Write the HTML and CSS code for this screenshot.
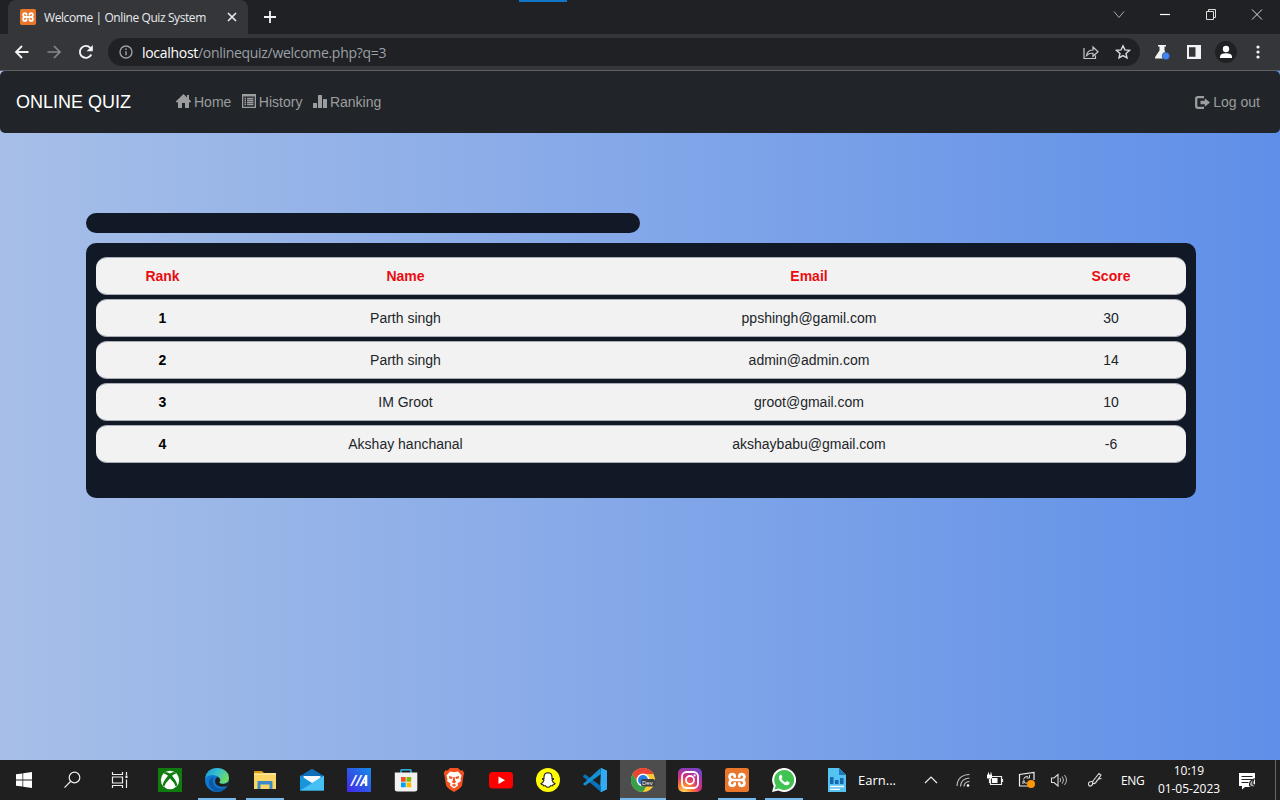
FILE: index.html
```html
<!DOCTYPE html>
<html lang="en">
<head>
<meta charset="utf-8">
<title>Welcome | Online Quiz System</title>
<link rel="stylesheet" href="styles.css">
</head>
<body>
<div class="screen">
  <svg width="0" height="0" class="defs">
    <defs>
      <symbol id="xampp" viewBox="0 0 24 24">
        <rect width="24" height="24" rx="2.5" fill="#e9762b"/>
        <path d="M9.800 8.700Q9.800 6.200 7.300 6.200T4.600 8.700Q4.600 10.800 6.800 11.800Q4.600 12.800 4.600 15.300T7.300 17.800Q9.800 17.800 9.800 15.300M14.200 8.700Q14.200 6.200 16.700 6.200T19.400 8.700Q19.400 10.800 17.200 11.800Q19.400 12.800 19.400 15.300T16.700 17.800Q14.200 17.800 14.200 15.300M8 12H16" fill="none" stroke="#fff" stroke-width="2.700" stroke-linecap="round" stroke-linejoin="round"/>
      </symbol>
    </defs>
  </svg>

  <header class="tabstrip">
    <div class="tab">
      <svg class="favicon" width="16" height="16"><use href="#xampp"/></svg>
      <span class="tab-title">Welcome | Online Quiz System</span>
      <svg class="tab-close" width="10" height="10" viewBox="0 0 10 10"><path d="M1 1l8 8M9 1L1 9" stroke="#e8eaed" stroke-width="1.700"/></svg>
    </div>
    <svg class="newtab" width="12" height="12" viewBox="0 0 12 12"><path d="M6 0v12M0 6h12" stroke="#f1f3f4" stroke-width="1.800"/></svg>
    <div class="window-controls">
      <svg width="46" height="28" viewBox="0 0 46 28"><path d="M18 11.500l5 6 5-6" fill="none" stroke="#aaa"/></svg>
      <svg width="46" height="28" viewBox="0 0 46 28"><path d="M18 14.500h10" stroke="#fff" stroke-width="1.200"/></svg>
      <svg width="46" height="28" viewBox="0 0 46 28"><path d="M18.500 11.500h7v8h-7zM20.500 11.500v-2h7v8h-2" fill="none" stroke="#ddd"/></svg>
      <svg width="46" height="28" viewBox="0 0 46 28"><path d="M18 9.500l10 10M28 9.500l-10 10" stroke="#ddd"/></svg>
    </div>
    <span class="top-handle"></span>
  </header>

  <div class="toolbar">
    <svg class="tool" width="16" height="16" viewBox="0 0 16 16"><path d="M14.500 8H2.500M8 2L2 8l6 6" fill="none" stroke="#f1f3f4" stroke-width="1.800"/></svg>
    <svg class="tool" width="16" height="16" viewBox="0 0 16 16"><path d="M1.500 8h12M8 2l6 6-6 6" fill="none" stroke="#85878a" stroke-width="1.700"/></svg>
    <svg class="tool" width="16" height="16" viewBox="0 0 16 16"><path d="M13.300 10.500A6 6 0 1 1 12.300 3.800L14 5.500" fill="none" stroke="#f1f3f4" stroke-width="1.900"/><path d="M14.800 1v6.200H8.600z" fill="#f1f3f4"/></svg>
    <div class="omnibox">
      <svg width="14" height="14" viewBox="0 0 14 14"><circle cx="7" cy="7" r="6" fill="none" stroke="#9aa0a6" stroke-width="1.400"/><path d="M7 6.200v4M7 3.500v1.400" stroke="#9aa0a6" stroke-width="1.500"/></svg>
      <span class="url"><span class="host">localhost</span>/onlinequiz/welcome.php?q=3</span>
      <span class="omni-actions">
        <svg width="16" height="16" viewBox="0 0 16 16"><path d="M1 4v10.500h11.500v-3M3.500 11.500Q4.500 6 10 6V3l5 4.700-5 4.600V9.300Q6 9 3.500 11.500z" fill="none" stroke="#c4c7c9" stroke-width="1.200"/></svg>
        <svg width="16" height="16" viewBox="0 0 16 16"><path d="M8 1.800l1.900 4.100 4.500.5-3.400 3 1 4.500L8 11.600l-4 2.300 1-4.500-3.400-3 4.500-.5z" fill="none" stroke="#d8dadd" stroke-width="1.400"/></svg>
      </span>
    </div>
    <div class="tool-actions">
      <svg width="16" height="16" viewBox="0 0 16 16"><path d="M4 1h8v1.500h-1.500v4L15 14.500H1.500Q0.500 14.500 1.200 13L5.500 6.500v-4H4z" fill="#f1f3f4"/><circle cx="12" cy="12" r="3.800" fill="#4285f4" stroke="#35363a" stroke-width=".6"/></svg>
      <svg width="16" height="16" viewBox="0 0 16 16"><path d="M1 1h14v14H1zM3 3.200v9.600h6.500V3.200z" fill="#f1f3f4" fill-rule="evenodd"/></svg>
      <svg width="22" height="22" viewBox="0 0 22 22"><circle cx="11" cy="11" r="11" fill="#202124"/><circle cx="11" cy="8" r="3.200" fill="#fff"/><path d="M5 17v-1.500Q5.500 12.300 11 12.300T17 15.500V17z" fill="#fff"/></svg>
      <svg width="16" height="16" viewBox="0 0 16 16"><g fill="#f1f3f4"><circle cx="8" cy="3" r="1.600"/><circle cx="8" cy="8" r="1.600"/><circle cx="8" cy="13" r="1.600"/></g></svg>
    </div>
  </div>

  <main class="page">
    <nav class="navbar">
      <a class="brand">ONLINE QUIZ</a>
      <div class="links">
        <a><svg width="15" height="14" viewBox="0 0 15 14"><path d="M7.500 0L11 3.400V1h2v4.300l2 2V8.200h-2V14H9V9H6v5H2V8.200H0v-.9z" fill="currentColor"/></svg>Home</a>
        <a><svg width="14" height="14" viewBox="0 0 14 14"><path d="M0 0h14v14H0zM1.300 2.600v10.100h11.400V2.600z" fill="currentColor" fill-rule="evenodd"/><path d="M2.500 4.500h1.500M5 4.500h6.500M2.500 6.500h1.500M5 6.500h6.500M2.500 8.500h1.500M5 8.500h6.500M2.500 10.500h1.500M5 10.500h6.500" stroke="currentColor" stroke-width="1.300"/></svg>History</a>
        <a><svg width="14" height="14" viewBox="0 0 14 14"><path d="M0 9.500Q0 9 .5 9H3.500Q4 9 4 9.500V14H0zM5 1.500Q5 1 5.500 1H8.500Q9 1 9 1.500V14H5zM10 5.500Q10 5 10.500 5H13.500Q14 5 14 5.500V14H10z" fill="currentColor"/></svg>Ranking</a>
      </div>
      <a class="logout"><svg width="15" height="13" viewBox="0 0 15 13"><path d="M9 1.200H3Q1.200 1.200 1.200 3v7Q1.200 11.800 3 11.800H9" fill="none" stroke="currentColor" stroke-width="2.300"/><path d="M5.500 4.700H9.800V2.200L15 6.500 9.800 10.800V8.300H5.500z" fill="currentColor"/></svg>Log out</a>
    </nav>

    <section class="container">
      <div class="bar"></div>
      <div class="panel">
        <div class="row head"><span>Rank</span><span>Name</span><span>Email</span><span>Score</span></div>
        <div class="row"><b>1</b><span>Parth singh</span><span>ppshingh@gamil.com</span><span>30</span></div>
        <div class="row"><b>2</b><span>Parth singh</span><span>admin@admin.com</span><span>14</span></div>
        <div class="row"><b>3</b><span>IM Groot</span><span>groot@gmail.com</span><span>10</span></div>
        <div class="row"><b>4</b><span>Akshay hanchanal</span><span>akshaybabu@gmail.com</span><span>-6</span></div>
      </div>
    </section>
  </main>

  <footer class="taskbar">
    <div class="system">
      <svg width="24" height="24" viewBox="0 0 24 24"><path d="M4 6.300l6.500-.9v6.200H4zM11.200 5.300L20 4v7.600h-8.800zM4 12.400h6.500v6.200L4 17.700zM11.200 12.400H20V20l-8.800-1.300z" fill="#fff"/></svg>
      <svg width="24" height="24" viewBox="0 0 24 24"><circle cx="14.500" cy="9.500" r="5.300" fill="none" stroke="#eee" stroke-width="1.200"/><path d="M10.500 13.500L4.500 19.700" stroke="#eee" stroke-width="1.200"/></svg>
      <svg width="24" height="24" viewBox="0 0 24 24"><path d="M4.500 4v2.500h10V4M4.500 20v-2.500h10V20M4.500 9h10v6h-10zM18.500 4v3M18.500 11.500V20" fill="none" stroke="#eee" stroke-width="1.200"/><path d="M17.500 7.500h2v2.500h-2z" fill="#fff"/></svg>
    </div>
    <div class="apps">
      <div class="app"><svg viewBox="0 0 24 24"><rect width="24" height="24" fill="#107c10"/><circle cx="12" cy="12" r="9.200" fill="#fff"/><path d="M7.300 4.200Q9 3.700 12 5.600 15 3.700 16.700 4.200L18.200 5.700Q16.500 5.500 14 7.800 18.500 13 19.300 17L17.800 18.800Q16.500 14.500 12 10.500 7.500 14.500 6.200 18.800L4.700 17Q5.500 13 10 7.800 7.500 5.500 5.800 5.700z" fill="#107c10"/></svg></div>
      <div class="app open"><svg viewBox="0 0 24 24"><defs><linearGradient id="edge" x1="0" y1="0" x2="1" y2=".5"><stop offset="0" stop-color="#1593d4"/><stop offset=".5" stop-color="#35bfd2"/><stop offset="1" stop-color="#70dc65"/></linearGradient></defs><circle cx="12" cy="12" r="12" fill="#1177d1"/><path d="M.2 10Q1.800 0 12 0 23 .5 24 9.500 24 15.500 18 15.800 13.500 15.700 14.500 13.500 16 10 12 8 5 5 .2 10z" fill="url(#edge)"/><path d="M9.500 9Q6 12 9 17 13 23 21.500 19.200 17 25 9.500 23.200 2 18 4.500 12 6 9 9.500 9z" fill="#0c59a4"/><path d="M13 9Q17 12 14.300 14 14 15.800 18 16 21 16 24 13.500L22.500 18Q14 20.500 10.500 15.500 9 10 13 9z" fill="#1f1f1f"/></svg></div>
      <div class="app open"><svg viewBox="0 0 24 24"><path d="M1 5V3.500Q1 3 1.500 3H9l2 2z" fill="#d99b16"/><path d="M1 5h22v16H1z" fill="#fbd667"/><path d="M1 6l9 0 2-1h11v2H1z" fill="#ffe391"/><path d="M4.500 21v-7.500Q4.500 13 5 13h14q.5 0 .5.500V21h-3v-4.500h-9V21z" fill="#398cc8"/></svg></div>
      <div class="app"><svg viewBox="0 0 24 24"><path d="M1 7.500L12 .8l11 6.700v4H1z" fill="#0c6dbb"/><path d="M3.500 8h17v7h-17z" fill="#f3f7fa"/><path d="M0 7.500l12 8 12-8V22.500H0z" fill="#28a8e9"/><path d="M24 7.500v15H0z" fill="#46c0f4"/><path d="M0 7.500l12 7.500-12 7.500z" fill="#1894dc"/></svg></div>
      <div class="app"><svg viewBox="0 0 24 24"><defs><linearGradient id="asus" x1="0" y1="1" x2="1" y2="0"><stop stop-color="#4426e8"/><stop offset="1" stop-color="#168be9"/></linearGradient></defs><rect width="24" height="24" fill="url(#asus)"/><path d="M3 18L8.500 7H10.500L5 18zM8 18L13.500 7h2L10 18z" fill="#e7ecff"/><path d="M12.500 18L18.300 7H20.300V18H18V15.500H16L14.700 18zM17 13.500H18V11.500z" fill="#fff" fill-rule="evenodd"/></svg></div>
      <div class="app"><svg viewBox="0 0 24 24"><path d="M7 5V2.500Q7 1.800 7.800 1.800H16.200Q17 1.800 17 2.500V5" fill="none" stroke="#31b2e2" stroke-width="1.500"/><path d="M.8 4.500h22.500V21q0 2.500-2.500 2.500H3.300Q.8 23.500.8 21z" fill="#f1f1f1"/><path d="M7 9h4.700v4.700H7z" fill="#f25022"/><path d="M12.500 9h4.700v4.700h-4.700z" fill="#7fba00"/><path d="M7 14.500h4.700v4.700H7z" fill="#00a4ef"/><path d="M12.500 14.500h4.700v4.700h-4.700z" fill="#ffb900"/></svg></div>
      <div class="app"><svg viewBox="0 0 24 24"><path d="M8 0h8l2.500 2.500 2-.3L22.300 5l-.8 2.500L20 17.500Q18.500 20.500 12 24 5.500 20.500 4 17.500L2.500 7.500 1.700 5l1.800-2.800 2 .3z" fill="#f4511e"/><path d="M12 4.300l4-.8 3.500 4-1 3.500.5 2-3.500 2.500.5 2-4 3-4-3 .5-2L5 13l.5-2-1-3.500 3.500-4z" fill="#fff"/><path d="M7 8l3.800 1-1 2-2.500-.5zM17 8l-3.800 1 1 2 2.500-.5zM11.300 9h1.400l.5 3.500 1 1.500L12 15.500 9.800 14l1-1.500zM9.500 17l2.500-1 2.500 1-2.500 1.700z" fill="#f4511e"/></svg></div>
      <div class="app"><svg viewBox="0 0 24 24"><rect y="4" width="24" height="16.500" rx="3.500" fill="#f00"/><path d="M9.500 8.500l6.500 3.700-6.500 3.700z" fill="#fff"/></svg></div>
      <div class="app"><svg viewBox="0 0 24 24"><circle cx="12" cy="12" r="12" fill="#fffc00"/><path d="M12 4.700Q16 4.800 16 9v1.700l1.500-.2q.5.700-1.500 1.700.8 2.700 3 3.300 0 1-2 1.300l-.4 1-2 0Q13.300 19.300 12 19.300T9.400 17.800l-2 0-.4-1q-2-.3-2-1.300 2.200-.6 3-3.300-2-1-1.500-1.700l1.500.2V9Q8 4.800 12 4.700z" fill="#fff" stroke="#222" stroke-width="1.100"/></svg></div>
      <div class="app"><svg viewBox="0 0 24 24"><path d="M18 0l6 2.800v18.400L18 24l-1-1z" fill="#32a9f0"/><path d="M0 8l2-1.700L18 18v6L0 8.800z" fill="#0871b8"/><path d="M0 16L17.500 0 18 6 2 17.800z" fill="#168fd4"/><path d="M18 0l6 2.800v18.400L18 24z" fill="#32a9f0"/></svg></div>
      <div class="app open active"><svg viewBox="0 0 24 24"><circle cx="12" cy="12" r="12" fill="#fcc934"/><path d="M1.600 6A12 12 0 0 1 22.400 6H12L7 15z" fill="#ea4335"/><path d="M1.600 6A12 12 0 0 0 12 24L17 15 7 15z" fill="#34a04a"/><circle cx="12" cy="12" r="6.500" fill="#fff"/><circle cx="12" cy="12" r="5" fill="#267be5"/><rect x="10" y="11" width="14" height="7.500" rx="2" fill="#3c4043"/><text x="11" y="17" class="dev">Dev</text></svg></div>
      <div class="app"><svg viewBox="0 0 24 24"><defs><radialGradient id="insta" cx=".25" cy="1" r="1.100"><stop stop-color="#ffd85c"/><stop offset=".3" stop-color="#fa7e33"/><stop offset=".6" stop-color="#d62e7c"/><stop offset="1" stop-color="#7045c9"/></radialGradient></defs><rect width="24" height="24" rx="5" fill="url(#insta)"/><g fill="none" stroke="#fff" stroke-width="1.800"><rect x="4" y="4" width="16" height="16" rx="4.500"/><circle cx="12" cy="12" r="4"/></g><circle cx="16.600" cy="7.400" r="1.100" fill="#fff"/></svg></div>
      <div class="app open"><svg><use href="#xampp"/></svg></div>
      <div class="app open"><svg viewBox="0 0 24 24"><path d="M0 24L1.700 18A12 12 0 1 1 6.300 22.500z" fill="#fff"/><path d="M2.400 21.600L3.800 17.400A10 10 0 1 1 7 20.500z" fill="#40c351"/><path d="M8.500 6.500Q9.300 6.200 9.700 7.200L10.500 9.200 9.400 10.800Q10.500 13.200 13.500 14.500L14.900 13 17.500 14.200Q17.800 17 14.800 17.300 12.500 17.400 9.300 14.300 6.500 11.400 6.900 9 7.300 7 8.500 6.500z" fill="#fff"/></svg></div>
    </div>
    <div class="news">
      <svg width="20" height="24" viewBox="0 0 20 24"><path d="M1 0h11l7 7v17H1z" fill="#55c3f1"/><path d="M12 0v7h7z" fill="#2279bd"/><path d="M3 9h3.500v7H3zM8 12h3.500v4H8zM13 10h3.500v6H13z" fill="#1669ad"/><path d="M3 18.500h14M3 21.300h10" stroke="#fff" stroke-width="1.300"/></svg>
      <span>Earn...</span>
    </div>
    <div class="tray">
      <svg viewBox="0 0 20 20"><path d="M4 13l6-6 6 6" fill="none" stroke="#eee" stroke-width="1.200"/></svg>
      <svg viewBox="0 0 20 20"><g fill="none" stroke="#bbb" stroke-width="1.200"><path d="M4 16Q4.500 5 16.500 4.500M7.500 16.500Q8 8.500 16.500 8M11 16.500Q11 12 16.500 11.500"/></g><circle cx="15" cy="15.500" r="1.300" fill="#fff"/></svg>
      <svg viewBox="0 0 20 20"><path d="M5.500 6.500h11v8h-11zM17.500 9v3M4.500 9v4" fill="none" stroke="#eee" stroke-width="1.200"/><path d="M7 8h5.500v5H7zM2 4.500h5v4H2zM3 2.500h1v2H3zM5.500 2.500h1v2h-1z" fill="#fff"/></svg>
      <svg viewBox="0 0 20 20"><path d="M13 16H2.500V4.500L17 2.500V10" fill="none" stroke="#eee" stroke-width="1.200"/><path d="M11 6.500Q7 6 6.500 9.500M6.500 12Q8 13.500 10 13M12.500 5v3h-3M6 14v-3h2" fill="none" stroke="#ddd"/><circle cx="14" cy="14" r="4" fill="#ff9800"/></svg>
      <svg viewBox="0 0 20 20"><path d="M2.500 8v4.500h2.500l4 3.500V4.500L5 8z" fill="none" stroke="#ddd" stroke-width="1.100"/><path d="M11 8q1.500 2 0 4M13.200 6.500q2.800 3.500 0 7.200M15.500 5q4 5 0 10" fill="none" stroke="#bbb"/></svg>
      <svg class="pen" viewBox="0 0 20 20"><path d="M8 11l6-7.500 2 1.500-5.500 8-3 .7zM8 11.500Q3 11 3.500 14.500 4.500 17.500 7 15T9.500 13.500Q11 12.500 12 10.500T16.500 8.500" fill="none" stroke="#ddd" stroke-width="1.100"/></svg>
      <span class="lang">ENG</span>
      <span class="clock"><span>10:19</span><span>01-05-2023</span></span>
      <svg class="notice" viewBox="0 0 20 20"><path d="M2 3h16v14H8l-3 2.500V16H2z" fill="#fff"/><path d="M4.500 6.500h11M4.500 9.500h11M4.500 12.500h7" stroke="#222" stroke-width="1.100"/><path d="M17 9q-5 2-4.500 6.500 4 3.500 6-.5Q14 15.500 17 9z" fill="#aaa" stroke="#1f1f1f" stroke-width="1.200"/></svg>
    </div>
  </footer>
</div>
</body>
</html>
```
FILE: styles.css
```css
* { box-sizing: border-box; }
body { margin: 0; }
svg { display: block; flex: none; }
.defs { position: absolute; }
.screen {
  width: 1280px;
  height: 800px;
  overflow: hidden;
  display: flex;
  flex-direction: column;
  font-family: "Liberation Sans", Arial, sans-serif;
  font-size: 14px;
}

/* Browser chrome */
.tabstrip {
  position: relative;
  height: 34px;
  background: #202124;
  display: flex;
  align-items: flex-start;
  padding-left: 8px;
}
.tab {
  width: 240px;
  height: 34px;
  background: #35363a;
  border-radius: 8px 8px 0 0;
  display: flex;
  align-items: center;
  padding: 0 11px 0 12px;
}
.tab-title {
  margin-left: 8px;
  flex: 1;
  color: #e8eaed;
  font: 12px "Open Sans", sans-serif;
  letter-spacing: -0.41px;
  white-space: nowrap;
}
.newtab { margin: 11px 0 0 16px; }
.window-controls { display: flex; margin-left: auto; }
.top-handle {
  position: absolute;
  left: 519px;
  top: 0;
  width: 48px;
  height: 2px;
  background: #1075c6;
}
.toolbar {
  height: 37px;
  background: #35363a;
  border-bottom: 1px solid #5d6063;
  display: flex;
  align-items: center;
  padding: 0 14px;
  gap: 16px;
}
.omnibox {
  width: 1032px;
  height: 28px;
  margin-left: -2px;
  border-radius: 14px;
  background: #202124;
  display: flex;
  align-items: center;
  padding: 0 9px 0 11px;
}
.url {
  margin-left: 9px;
  color: #9aa0a6;
  font: 14px "Open Sans", sans-serif;
  letter-spacing: -0.3px;
}
.host { color: #fff; }
.omni-actions { display: flex; gap: 16px; margin-left: auto; }
.tool-actions { display: flex; align-items: center; gap: 13px; margin-left: -2px; }
.tool-actions svg:first-child { margin-right: 3px; }

/* Quiz page */
.page {
  height: 689px;
  background: linear-gradient(to right, #a7bfe8, #5f8fe8);
}
.navbar {
  height: 62px;
  background: #212529;
  border-radius: 5px;
  display: flex;
  align-items: center;
  padding: 0 20px 0 16px;
  color: #9b9d9e;
}
.brand { width: 160px; color: #fff; font-size: 18px; }
.links { display: flex; gap: 10.5px; }
.links a, .logout { display: flex; align-items: center; gap: 3px; }
.links svg { margin-top: -2px; }
.logout { margin-left: auto; }
.container { width: 1110px; margin: 80px 0 0 85.5px; }
.bar { width: 554.5px; height: 20px; border-radius: 10px; background: #111927; }
.panel {
  height: 254.5px;
  margin-top: 10px;
  padding: 14px 10px 0;
  border-radius: 10px;
  background: #111927;
  display: flex;
  flex-direction: column;
  gap: 4px;
}
.row {
  height: 38px;
  border: 1px solid #a9acb2;
  border-width: 1px 0;
  border-radius: 11px;
  background: #f2f2f2;
  color: #212529;
  display: grid;
  grid-template-columns: 134px 352px 455px 149px;
  align-items: center;
  text-align: center;
}
.row b { color: #000; }
.head { color: #eb0c12; font-weight: bold; }

/* Desktop taskbar */
.taskbar {
  height: 40px;
  background: #1f1f20;
  display: flex;
  color: #fff;
  font: 12px "Open Sans", sans-serif;
}
.system { display: flex; width: 146.500px; align-items: center; padding-left: 12px; gap: 24px; }
.apps { display: flex; }
.app {
  width: 47.25px;
  display: flex;
  flex-direction: column;
  align-items: center;
  padding-top: 8px;
}
.app svg { width: 24px; height: 24px; }
.app.open::after {
  content: "";
  width: 38px;
  height: 2px;
  margin-top: 6px;
  background: #76b9ed;
}
.app.active { background: linear-gradient(#4d4d4e, #4d4d4e) center / 46px 100% no-repeat; }
.app.active::after { width: 46px; }
.dev { font: 6px "Open Sans", sans-serif; fill: #fff; }
.news { display: flex; align-items: center; gap: 11px; margin-left: 19px; font-size: 13px; }
.tray {
  display: flex;
  align-items: center;
  width: 355px;
  margin: 0 4px 0 auto;
  border-right: 1px solid #666;
}
.tray svg { width: 20px; height: 20px; margin-right: 12px; }
.tray .pen { margin-left: 4px; margin-right: 16px; }
.lang { width: 24px; letter-spacing: -0.4px; }
.clock {
  width: 86px;
  margin-left: 1px;
  display: flex;
  flex-direction: column;
  align-items: center;
  line-height: 18px;
  letter-spacing: -0.05px;
}
.tray .notice { margin: 0 0 0 5px; }
```
